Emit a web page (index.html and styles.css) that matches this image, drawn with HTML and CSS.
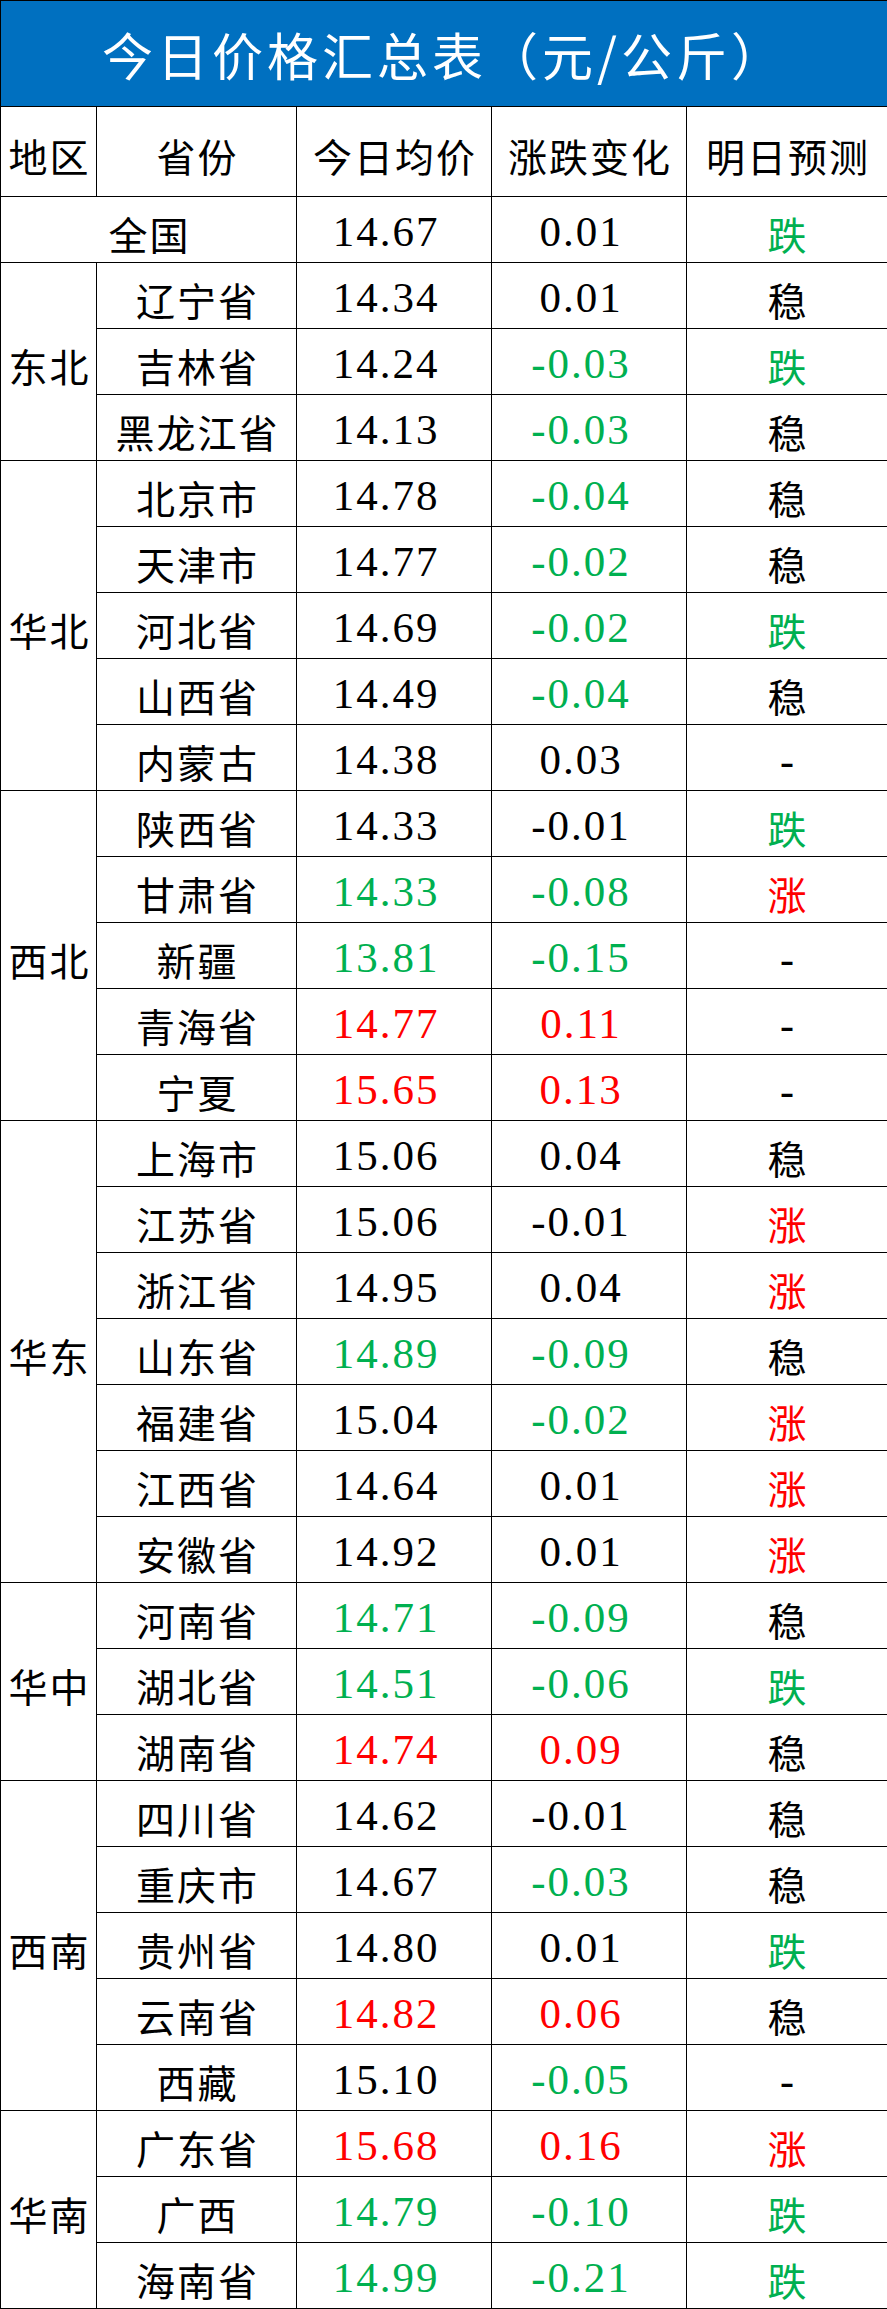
FILE: index.html
```html
<!DOCTYPE html>
<html lang="zh-CN">
<head>
<meta charset="utf-8">
<title>今日价格汇总表</title>
<link rel="stylesheet" href="styles.css">
</head>
<body>
<table class="price-table">
  <colgroup>
    <col class="c-region"><col class="c-prov"><col class="c-price"><col class="c-change"><col class="c-fc">
  </colgroup>
  <tr class="title-row"><td colspan="5" class="title">今日价格汇总表（元/公斤）</td></tr>
  <tr class="head-row">
    <td class="cn">地区</td><td class="cn">省份</td><td class="cn">今日均价</td><td class="cn">涨跌变化</td><td class="cn">明日预测</td>
  </tr>
  <tr><td colspan="2" class="cn">全国</td><td class="num">14.67</td><td class="num">0.01</td><td class="cn g">跌</td></tr>

  <tr><td rowspan="3" class="cn region">东北</td><td class="cn">辽宁省</td><td class="num">14.34</td><td class="num">0.01</td><td class="cn">稳</td></tr>
  <tr><td class="cn">吉林省</td><td class="num">14.24</td><td class="num g">-0.03</td><td class="cn g">跌</td></tr>
  <tr><td class="cn">黑龙江省</td><td class="num">14.13</td><td class="num g">-0.03</td><td class="cn">稳</td></tr>

  <tr><td rowspan="5" class="cn region">华北</td><td class="cn">北京市</td><td class="num">14.78</td><td class="num g">-0.04</td><td class="cn">稳</td></tr>
  <tr><td class="cn">天津市</td><td class="num">14.77</td><td class="num g">-0.02</td><td class="cn">稳</td></tr>
  <tr><td class="cn">河北省</td><td class="num">14.69</td><td class="num g">-0.02</td><td class="cn g">跌</td></tr>
  <tr><td class="cn">山西省</td><td class="num">14.49</td><td class="num g">-0.04</td><td class="cn">稳</td></tr>
  <tr><td class="cn">内蒙古</td><td class="num">14.38</td><td class="num">0.03</td><td class="dash">-</td></tr>

  <tr><td rowspan="5" class="cn region">西北</td><td class="cn">陕西省</td><td class="num">14.33</td><td class="num">-0.01</td><td class="cn g">跌</td></tr>
  <tr><td class="cn">甘肃省</td><td class="num g">14.33</td><td class="num g">-0.08</td><td class="cn r">涨</td></tr>
  <tr><td class="cn">新疆</td><td class="num g">13.81</td><td class="num g">-0.15</td><td class="dash">-</td></tr>
  <tr><td class="cn">青海省</td><td class="num r">14.77</td><td class="num r">0.11</td><td class="dash">-</td></tr>
  <tr><td class="cn">宁夏</td><td class="num r">15.65</td><td class="num r">0.13</td><td class="dash">-</td></tr>

  <tr><td rowspan="7" class="cn region">华东</td><td class="cn">上海市</td><td class="num">15.06</td><td class="num">0.04</td><td class="cn">稳</td></tr>
  <tr><td class="cn">江苏省</td><td class="num">15.06</td><td class="num">-0.01</td><td class="cn r">涨</td></tr>
  <tr><td class="cn">浙江省</td><td class="num">14.95</td><td class="num">0.04</td><td class="cn r">涨</td></tr>
  <tr><td class="cn">山东省</td><td class="num g">14.89</td><td class="num g">-0.09</td><td class="cn">稳</td></tr>
  <tr><td class="cn">福建省</td><td class="num">15.04</td><td class="num g">-0.02</td><td class="cn r">涨</td></tr>
  <tr><td class="cn">江西省</td><td class="num">14.64</td><td class="num">0.01</td><td class="cn r">涨</td></tr>
  <tr><td class="cn">安徽省</td><td class="num">14.92</td><td class="num">0.01</td><td class="cn r">涨</td></tr>

  <tr><td rowspan="3" class="cn region">华中</td><td class="cn">河南省</td><td class="num g">14.71</td><td class="num g">-0.09</td><td class="cn">稳</td></tr>
  <tr><td class="cn">湖北省</td><td class="num g">14.51</td><td class="num g">-0.06</td><td class="cn g">跌</td></tr>
  <tr><td class="cn">湖南省</td><td class="num r">14.74</td><td class="num r">0.09</td><td class="cn">稳</td></tr>

  <tr><td rowspan="5" class="cn region">西南</td><td class="cn">四川省</td><td class="num">14.62</td><td class="num">-0.01</td><td class="cn">稳</td></tr>
  <tr><td class="cn">重庆市</td><td class="num">14.67</td><td class="num g">-0.03</td><td class="cn">稳</td></tr>
  <tr><td class="cn">贵州省</td><td class="num">14.80</td><td class="num">0.01</td><td class="cn g">跌</td></tr>
  <tr><td class="cn">云南省</td><td class="num r">14.82</td><td class="num r">0.06</td><td class="cn">稳</td></tr>
  <tr><td class="cn">西藏</td><td class="num">15.10</td><td class="num g">-0.05</td><td class="dash">-</td></tr>

  <tr><td rowspan="3" class="cn region">华南</td><td class="cn">广东省</td><td class="num r">15.68</td><td class="num r">0.16</td><td class="cn r">涨</td></tr>
  <tr><td class="cn">广西</td><td class="num g">14.79</td><td class="num g">-0.10</td><td class="cn g">跌</td></tr>
  <tr><td class="cn">海南省</td><td class="num g">14.99</td><td class="num g">-0.21</td><td class="cn g">跌</td></tr>
</table>
</body>
</html>
```

FILE: styles.css
```css
html, body {
  margin: 0;
  padding: 0;
  background: #ffffff;
}

.price-table {
  width: 887px;
  border-collapse: collapse;
  table-layout: fixed;
  color: #000000;
}

.c-region { width: 96px; }
.c-prov { width: 200px; }
.c-price { width: 195px; }
.c-change { width: 195px; }
.c-fc { width: 201px; }

.price-table td {
  border: 1px solid #000000;
  padding: 0;
  text-align: center;
  vertical-align: middle;
  white-space: nowrap;
  overflow: hidden;
}

.price-table tr {
  height: 66px;
}

.price-table .title-row {
  height: 106px;
}

.price-table .head-row {
  height: 90px;
}

.title {
  background: #0070c0;
  color: #ffffff;
  font-family: "Noto Sans CJK SC", "Noto Sans", sans-serif;
  font-size: 51px;
  letter-spacing: 4px;
  padding-top: 6px;
  padding-left: 4px;
}

.cn {
  font-family: "Noto Sans CJK SC", "Noto Sans", sans-serif;
  font-size: 39px;
  letter-spacing: 2px;
  padding-top: 6px;
}

.price-table td.cn {
  padding-top: 6px;
  padding-left: 2px;
}

.price-table td.num {
  font-family: "Liberation Serif", "DejaVu Serif", serif;
  font-size: 43px;
  letter-spacing: 2px;
  padding-top: 4px;
  padding-right: 16px;
}

.price-table td.dash {
  font-family: "Liberation Serif", "DejaVu Serif", serif;
  font-size: 42px;
  padding-top: 6px;
}

.g { color: #00b050; }
.r { color: #ff0000; }
.price-table td.g { color: #00b050; }
.price-table td.r { color: #ff0000; }
```
